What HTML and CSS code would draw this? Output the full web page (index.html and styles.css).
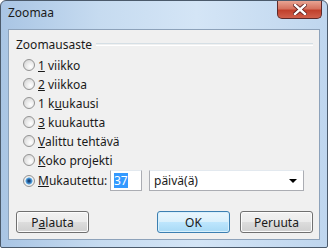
FILE: index.html
```html
<!DOCTYPE html>
<html lang="fi">
<head>
  <meta charset="UTF-8" />
  <title>Zoomaa</title>
  <link rel="stylesheet" href="styles.css">
</head>
<body>
  <div class="window">
    <div class="titlebar">
      <span class="title">Zoomaa</span>
      <div class="close-btn">
        <svg width="14" height="11" viewBox="0 0 14 11">
          <path d="M2 1 L12 10 M12 1 L2 10" stroke="#5a1a1a" stroke-width="4" stroke-linecap="square"/>
          <path d="M2 1 L12 10 M12 1 L2 10" stroke="#fff" stroke-width="2.4" stroke-linecap="square"/>
        </svg>
      </div>
    </div>

    <div class="client">
      <div class="group">
        <div class="group-head">
          <span>Zoomausaste</span>
          <div class="group-line"></div>
        </div>

        <div class="options">
          <label class="option"><span class="radio"></span><span><u>1</u> viikko</span></label>
          <label class="option"><span class="radio"></span><span><u>2</u> viikkoa</span></label>
          <label class="option"><span class="radio"></span><span>1 k<u>u</u>ukausi</span></label>
          <label class="option"><span class="radio"></span><span><u>3</u> kuukautta</span></label>
          <label class="option"><span class="radio"></span><span><u>V</u>alittu tehtävä</span></label>
          <label class="option"><span class="radio"></span><span><u>K</u>oko projekti</span></label>
          <div class="option custom">
            <span class="radio checked"></span><span class="custom-label"><u>M</u>ukautettu:</span>
            <div class="textbox"><span class="selected">37</span></div>
            <div class="combo">
              <span>päivä(ä)</span>
              <span class="arrow"></span>
            </div>
          </div>
        </div>
      </div>

      <div class="buttons">
        <button class="btn">P<u>a</u>lauta</button>
        <div class="right-buttons">
          <button class="btn default">OK</button>
          <button class="btn">Peruuta</button>
        </div>
      </div>
    </div>
  </div>
</body>
</html>
```

FILE: styles.css
```css
body {
  margin: 0;
  font-family: "Noto Sans", "Open Sans", sans-serif;
  font-size: 12px;
  color: #1a1a1a;
  background: #fff;
}

.window {
  width: 328px;
  height: 248px;
  box-sizing: border-box;
  border: 1px solid #4b5a6b;
  border-radius: 6px 6px 2px 2px;
  background: linear-gradient(90deg, #a9c5e4 0%, #c6dbf0 30%, #d4e5f6 60%, #bfd6ee 100%);
  display: flex;
  flex-direction: column;
  overflow: hidden;
}

.titlebar {
  height: 28px;
  display: flex;
  justify-content: space-between;
  align-items: flex-start;
  padding-left: 7px;
}

.title {
  margin-top: 4px;
  line-height: 16px;
}

.close-btn {
  width: 45px;
  height: 18px;
  margin-right: 5px;
  box-sizing: border-box;
  border: 1px solid #5d2a2a;
  border-top: none;
  border-radius: 0 0 5px 5px;
  background: linear-gradient(180deg, #e8a493 0%, #d5735f 45%, #c1402c 55%, #d0604c 100%);
  display: flex;
  align-items: center;
  justify-content: center;
}

.client {
  margin: 0 7px 7px 7px;
  flex: 1;
  border: 1px solid #8da2ba;
  background: #f0f0f0;
  display: flex;
  flex-direction: column;
  justify-content: space-between;
  padding: 6px 6px 6px 7px;
}

.group-head {
  display: flex;
  align-items: center;
  gap: 4px;
  height: 16px;
}

.group-line {
  flex: 1;
  height: 1px;
  border-top: 1px solid #d5dfe5;
  border-bottom: 1px solid #fff;
}

.options {
  display: flex;
  flex-direction: column;
  gap: 3px;
  margin-top: 5px;
  padding-left: 7px;
}

.option {
  display: flex;
  align-items: center;
  gap: 3px;
  height: 16px;
}

.radio {
  width: 10px;
  height: 10px;
  border-radius: 50%;
  border: 1px solid #939393;
  background: radial-gradient(circle at 65% 65%, #fff 0%, #ececec 40%, #cdcdcd 100%);
  flex: none;
}

.radio.checked {
  background: radial-gradient(circle, #0d2a4e 0%, #2a66a8 25%, #5eaee6 45%, #f4f4f4 55%, #dcdcdc 100%);
}

.custom {
  margin-top: -1px;
  height: 21px;
}

.custom-label {
  width: 69px;
}

.textbox {
  width: 32px;
  height: 21px;
  box-sizing: border-box;
  border: 1px solid #abadb3;
  border-top-color: #e3e9ef;
  background: #fff;
  display: flex;
  align-items: center;
  padding-left: 3px;
}

.selected {
  background: #3399ff;
  color: #fff;
  line-height: 15px;
}

.combo {
  margin-left: 4px;
  width: 155px;
  height: 21px;
  box-sizing: border-box;
  border: 1px solid #abadb3;
  border-top-color: #e3e9ef;
  background: #fff;
  display: flex;
  align-items: center;
  justify-content: space-between;
  padding: 0 6px 0 4px;
}

.arrow {
  width: 0;
  height: 0;
  border-left: 4px solid transparent;
  border-right: 4px solid transparent;
  border-top: 4px solid #000;
}

.buttons {
  display: flex;
  justify-content: space-between;
  align-items: center;
}

.right-buttons {
  display: flex;
  gap: 10px;
}

.btn {
  width: 73px;
  height: 22px;
  font-family: inherit;
  font-size: 12px;
  color: #1a1a1a;
  border: 1px solid #707070;
  border-radius: 3px;
  background: linear-gradient(180deg, #f2f2f2 0%, #ebebeb 49%, #dddddd 50%, #cfcfcf 100%);
  box-shadow: inset 0 0 0 1px #fcfcfc;
  padding: 0;
}

.btn.default {
  border-color: #3c7fb1;
  background: linear-gradient(180deg, #eaf6fd 0%, #d9f0fc 49%, #bee6fd 50%, #a7d9f5 100%);
  box-shadow: inset 0 0 0 1px #d7f0fd;
}
```
